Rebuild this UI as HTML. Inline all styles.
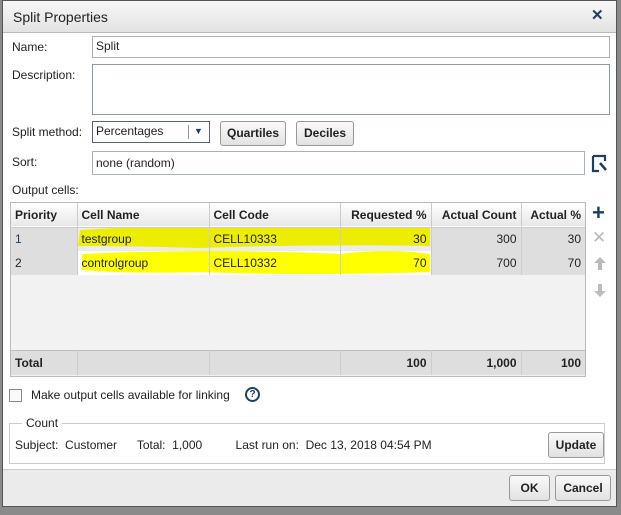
<!DOCTYPE html><html><head><style>
*{box-sizing:border-box;margin:0;padding:0}
body{width:621px;height:515px;background:#8a8a8a;font-family:"Liberation Sans",sans-serif;font-size:12px;color:#222;position:relative;overflow:hidden}
.a{position:absolute}
#dlg{left:2px;top:0;width:615px;height:507px;background:#fff;border:1px solid #555;}
.inp{position:absolute;border:1px solid #aab2bc;background:#fff;padding:2px 3px}
.btn{position:absolute;border:1px solid #999;border-radius:3px;background:linear-gradient(#fafafa,#e2e2e2);font-weight:bold;text-align:center;font-size:12px}
td,th{border-right:1px solid #ccc;padding:0 4px;white-space:nowrap}
table{border-collapse:collapse;font-size:12px}
</style></head><body>
<div id="dlg" class="a"></div>
<div class="a" style="left:3px;top:1px;width:613px;height:32px;background:linear-gradient(#f7f7f7,#e3e3e3);border-bottom:1px solid #bbb"></div>
<div class="a" style="left:13px;top:9px;font-size:14px;color:#222">Split Properties</div>
<div class="a" style="left:591px;top:6px;font-size:15px;font-weight:bold;color:#1d3f63">✕</div>

<div class="a" style="left:12px;top:40px">Name:</div>
<div class="inp" style="left:92px;top:36px;width:518px;height:22px">Split</div>
<div class="a" style="left:12px;top:68px">Description:</div>
<div class="inp" style="left:92px;top:64px;width:518px;height:51px;border-color:#8e99a6"></div>
<div class="a" style="left:12px;top:125px">Split method:</div>
<div class="inp" style="left:92px;top:121px;width:118px;height:22px;border-color:#5a6470;padding-top:2px">Percentages<span class="a" style="left:95px;top:3px;width:1px;height:14px;background:#999"></span><span class="a" style="left:101px;top:4px;font-size:9px;color:#1d3f63">▼</span></div>
<div class="btn" style="left:220px;top:121px;width:66px;height:25px;line-height:23px">Quartiles</div>
<div class="btn" style="left:296px;top:121px;width:58px;height:25px;line-height:23px">Deciles</div>
<div class="a" style="left:12px;top:155px">Sort:</div>
<div class="inp" style="left:92px;top:151px;width:493px;height:24px;padding-top:4px">none (random)</div>
<svg class="a" style="left:591px;top:154px" width="18" height="20"><path d="M2 2h12v5M2 2v15h6" stroke="#1d3f63" stroke-width="2.2" fill="none"/><path d="M9 9l6 7" stroke="#1d3f63" stroke-width="2.5"/></svg>
<div class="a" style="left:12px;top:183px">Output cells:</div>

<div class="a" style="left:10px;top:202px;width:576px;height:175px;border:1px solid #bbb;background:#f2f2f2"></div>
<div class="a" style="left:11px;top:227px;width:574px;height:24px;background:#ececec"></div>
<div class="a" style="left:11px;top:251px;width:574px;height:24px;background:#fff"></div>
<svg class="a" style="left:70px;top:218px" width="370" height="60"><path d="M10 12 Q140 4 270 10 Q320 4 360 10 L360 28 Q240 26 130 30 Q60 28 8 28Z" fill="#eded00"/><path d="M12 36 Q140 30 270 36 Q320 30 360 36 L360 54 Q240 58 130 54 Q60 56 12 52Z" fill="#ffff00"/></svg>
<table class="a" style="left:11px;top:203px;width:574px">
<tr style="height:24px;background:linear-gradient(#fff,#e8e8e8);font-weight:bold;border-bottom:1px solid #ccc"><th style="width:66px;text-align:left">Priority</th><th style="width:132px;text-align:left">Cell Name</th><th style="width:131px;text-align:left">Cell Code</th><th style="width:91px;text-align:right">Requested %</th><th style="width:90px;text-align:right">Actual Count</th><th style="text-align:right;border:0">Actual %</th></tr>
<tr style="height:24px;"><td style="background:#dedede;color:#1d3f63">1</td><td>testgroup</td><td>CELL10333</td><td style="text-align:right">30</td><td style="text-align:right;background:#dedede">300</td><td style="text-align:right;background:#dedede;border:0">30</td></tr>
<tr style="height:24px;"><td style="background:#dedede">2</td><td>controlgroup</td><td>CELL10332</td><td style="text-align:right">70</td><td style="text-align:right;background:#dedede">700</td><td style="text-align:right;background:#dedede;border:0">70</td></tr>
</table>
<table class="a" style="left:11px;top:350px;width:574px;background:#dedede;font-weight:bold;border-top:1px solid #bbb">
<tr style="height:24px"><td style="width:66px">Total</td><td style="width:132px"></td><td style="width:131px"></td><td style="width:91px;text-align:right">100</td><td style="width:90px;text-align:right">1,000</td><td style="text-align:right;border:0">100</td></tr></table>
<div class="a" style="left:592px;top:200px;font-size:22px;font-weight:bold;color:#1d3f63">+</div>
<div class="a" style="left:592px;top:228px;font-size:17px;color:#bbb">✕</div>
<svg class="a" style="left:594px;top:257px" width="12" height="14"><path d="M6 0L12 6H8v7H4V6H0Z" fill="#bbb"/></svg>
<svg class="a" style="left:594px;top:283px" width="12" height="14"><path d="M6 14L12 8H8V1H4v7H0Z" fill="#bbb"/></svg>

<div class="a" style="left:9px;top:389px;width:13px;height:13px;border:1px solid #888;background:#fafafa"></div>
<div class="a" style="left:31px;top:388px">Make output cells available for linking</div>
<div class="a" style="left:245px;top:387px;width:15px;height:15px;border:2px solid #1d3f63;border-radius:50%;font-size:10px;font-weight:bold;color:#1d3f63;text-align:center;line-height:11px">?</div>

<div class="a" style="left:9px;top:423px;width:596px;height:41px;border:1px solid #ccc"></div>
<div class="a" style="left:22px;top:416px;background:#fff;padding:0 4px">Count</div>
<div class="a" style="left:15px;top:438px">Subject:&nbsp; Customer&nbsp;&nbsp;&nbsp;&nbsp;&nbsp; Total:&nbsp; 1,000&nbsp;&nbsp;&nbsp;&nbsp;&nbsp;&nbsp;&nbsp;&nbsp;&nbsp; Last run on:&nbsp; Dec 13, 2018 04:54 PM</div>
<div class="btn" style="left:548px;top:432px;width:56px;height:26px;line-height:24px">Update</div>

<div class="a" style="left:3px;top:469px;width:613px;height:37px;background:#ebebeb;border-top:1px solid #ccc"></div>
<div class="btn" style="left:509px;top:475px;width:41px;height:26px;line-height:24px">OK</div>
<div class="btn" style="left:555px;top:475px;width:56px;height:26px;line-height:24px">Cancel</div>
</body></html>
